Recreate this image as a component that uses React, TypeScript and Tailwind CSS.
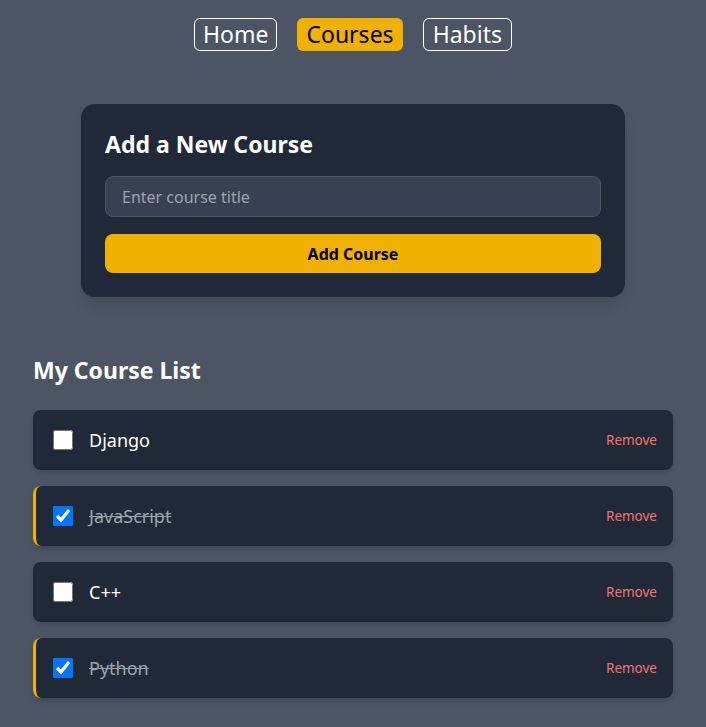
import React from "react";

const courses = [
  { title: "Django", done: false },
  { title: "JavaScript", done: true },
  { title: "C++", done: false },
  { title: "Python", done: true },
];

export default function App() {
  return (
    <div
      className="min-h-[727px] bg-[#4b5563] text-white"
      style={{ fontFamily: '"Noto Sans", "Open Sans", sans-serif' }}
    >
      <nav className="flex justify-center gap-5 pt-[18px]">
        <a className="h-[33px] flex items-center px-[8px] border border-white rounded-md text-[23px] leading-none text-white">Home</a>
        <a className="h-[33px] flex items-center px-[9px] rounded-md bg-[#f0b100] text-[23px] leading-none text-black">Courses</a>
        <a className="h-[33px] flex items-center px-[9px] border border-white rounded-md text-[23px] leading-none text-white">Habits</a>
      </nav>

      <div className="mx-auto mt-[53px] w-[544px] rounded-[14px] bg-[#1f2937] p-6 shadow-lg">
        <h2 className="text-[23px] font-bold leading-8">Add a New Course</h2>
        <input
          className="mt-4 block h-[41px] w-full rounded-lg border border-[#4b5563] bg-[#374151] px-4 text-base text-white placeholder-[#9ca3af] outline-none"
          placeholder="Enter course title"
        />
        <button className="mt-[17px] block h-[39px] w-full rounded-lg bg-[#f0b100] text-base font-bold text-black">
          Add Course
        </button>
      </div>

      <div className="mx-auto mt-[57px] w-[640px]">
        <h2 className="text-[23px] font-bold leading-8">My Course List</h2>
        <ul className="mt-[24px] flex flex-col gap-4">
          {courses.map((c) => (
            <li
              key={c.title}
              className={
                "flex h-[60px] items-center rounded-lg bg-[#1f2937] pr-4 shadow-md " +
                (c.done ? "border-l-[3px] border-[#f0b100] pl-[17px]" : "pl-5")
              }
            >
              <input
                type="checkbox"
                defaultChecked={c.done}
                className="h-5 w-5 accent-[#0075ff]"
              />
              <span
                className={
                  "ml-4 flex-1 text-[18px] " +
                  (c.done ? "text-[#9ca3af] line-through" : "text-white")
                }
              >
                {c.title}
              </span>
              <button className="text-[13.5px] text-[#f87171]">Remove</button>
            </li>
          ))}
        </ul>
      </div>
    </div>
  );
}
